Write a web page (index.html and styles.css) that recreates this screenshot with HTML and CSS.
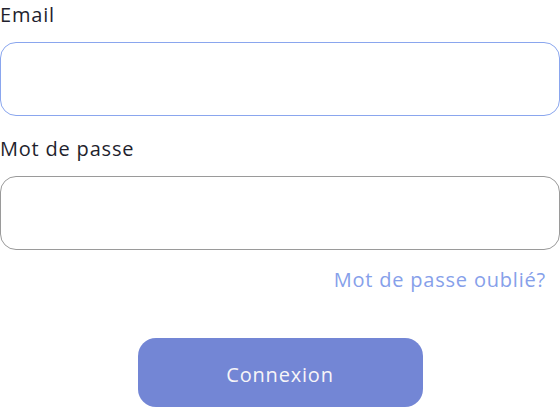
FILE: index.html
```html
<!DOCTYPE html>
<html lang="fr">
<head>
<meta charset="utf-8">
<link rel="stylesheet" href="styles.css">
</head>
<body>
<form class="login">
  <label class="field-label" for="email">Email</label>
  <input class="field field-active" id="email" type="email">
  <label class="field-label label-second" for="pwd">Mot de passe</label>
  <input class="field" id="pwd" type="password">
  <div class="forgot-row"><a class="forgot" href="#">Mot de passe oublié?</a></div>
  <div class="submit-row"><button class="submit" type="button">Connexion</button></div>
</form>
</body>
</html>
```
FILE: styles.css
```css
html, body {
  margin: 0;
  padding: 0;
  background: #ffffff;
}
body {
  font-family: "Open Sans", "Liberation Sans", sans-serif;
  width: 560px;
  height: 408px;
  overflow: hidden;
}
.login {
  display: flex;
  flex-direction: column;
}
.field-label {
  display: block;
  font-size: 20px;
  line-height: 30px;
  letter-spacing: 0.8px;
  color: #1f1f2e;
  margin-bottom: 12px;
}
.label-second {
  margin-top: 18px;
}
.field {
  box-sizing: border-box;
  width: 560px;
  height: 74px;
  border: 1px solid #9a9a9a;
  border-radius: 16px;
  background: #fff;
  margin: 0;
  outline: none;
}
.field-active {
  border-color: #8aa6ee;
}
.forgot-row {
  display: flex;
  justify-content: flex-end;
  padding-right: 14px;
  margin-top: 15px;
}
.forgot {
  font-size: 20px;
  line-height: 30px;
  letter-spacing: 0.8px;
  color: #86a0ea;
  text-decoration: none;
}
.submit-row {
  display: flex;
  justify-content: center;
  margin-top: 43px;
}
.submit {
  width: 285px;
  height: 69px;
  border: none;
  border-radius: 18px;
  background: #7386d5;
  color: #f7f5f8;
  font-family: inherit;
  font-size: 20px;
  letter-spacing: 0.8px;
  padding: 3px 0 0;
}
```
